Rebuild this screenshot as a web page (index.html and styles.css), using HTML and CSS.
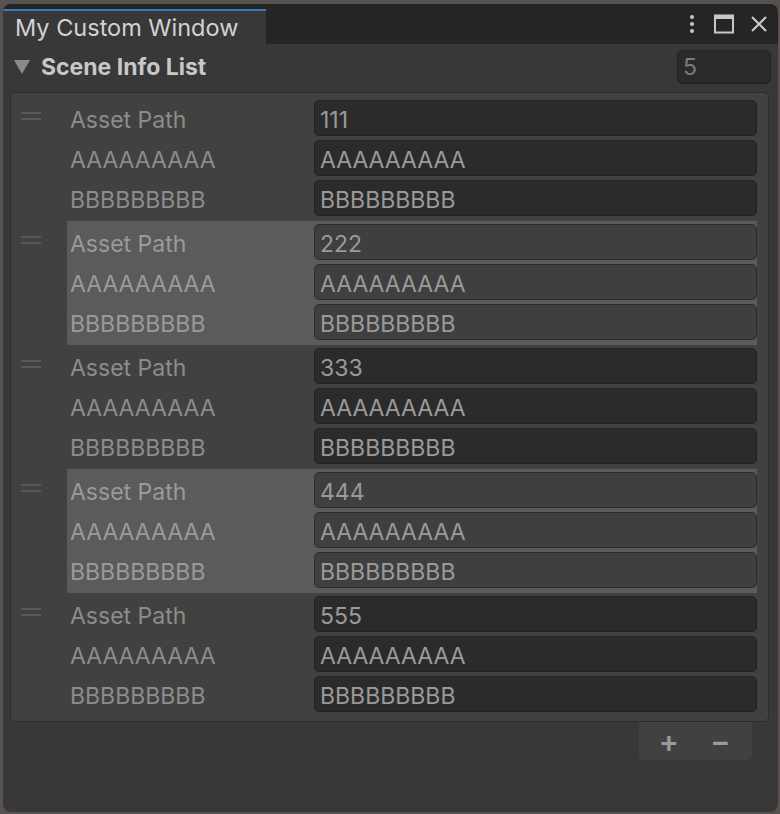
FILE: index.html
```html
<!DOCTYPE html>
<html>
<head>
<meta charset="utf-8">
<link rel="stylesheet" href="styles.css">
</head>
<body>
<div class="window">
  <div class="tabbar">
    <div class="tab">My Custom Window</div>
    <div class="tab-icons">
      <svg class="ico" width="14" height="22" viewBox="0 0 14 22"><circle cx="7" cy="4" r="2" fill="#c8c8c8"/><circle cx="7" cy="11" r="2" fill="#c8c8c8"/><circle cx="7" cy="18" r="2" fill="#c8c8c8"/></svg>
      <svg class="ico" width="22" height="22" viewBox="0 0 22 22"><rect x="2" y="2.5" width="18" height="17" fill="none" stroke="#c8c8c8" stroke-width="2"/><rect x="2" y="2" width="18" height="4" fill="#c8c8c8"/></svg>
      <svg class="ico" width="20" height="20" viewBox="0 0 20 20"><path d="M3 3 L17 17 M17 3 L3 17" stroke="#c8c8c8" stroke-width="2.2"/></svg>
    </div>
  </div>
  <div class="content">
    <div class="header">
      <div class="foldout">
        <svg class="tri" width="18" height="16" viewBox="0 0 18 16"><path d="M1 1 H17 L9 15 Z" fill="#8a8a8a"/></svg>
        <span class="title">Scene Info List</span>
      </div>
      <div class="count">5</div>
    </div>
    <div class="list">
      <div class="element">
        <div class="handle"><span></span><span></span></div>
        <div class="fields">
          <div class="row"><span class="label">Asset Path</span><span class="field">111</span></div>
          <div class="row"><span class="label">AAAAAAAAA</span><span class="field">AAAAAAAAA</span></div>
          <div class="row"><span class="label">BBBBBBBBB</span><span class="field">BBBBBBBBB</span></div>
        </div>
      </div>
      <div class="element sel">
        <div class="handle"><span></span><span></span></div>
        <div class="fields">
          <div class="row"><span class="label">Asset Path</span><span class="field">222</span></div>
          <div class="row"><span class="label">AAAAAAAAA</span><span class="field">AAAAAAAAA</span></div>
          <div class="row"><span class="label">BBBBBBBBB</span><span class="field">BBBBBBBBB</span></div>
        </div>
      </div>
      <div class="element">
        <div class="handle"><span></span><span></span></div>
        <div class="fields">
          <div class="row"><span class="label">Asset Path</span><span class="field">333</span></div>
          <div class="row"><span class="label">AAAAAAAAA</span><span class="field">AAAAAAAAA</span></div>
          <div class="row"><span class="label">BBBBBBBBB</span><span class="field">BBBBBBBBB</span></div>
        </div>
      </div>
      <div class="element sel">
        <div class="handle"><span></span><span></span></div>
        <div class="fields">
          <div class="row"><span class="label">Asset Path</span><span class="field">444</span></div>
          <div class="row"><span class="label">AAAAAAAAA</span><span class="field">AAAAAAAAA</span></div>
          <div class="row"><span class="label">BBBBBBBBB</span><span class="field">BBBBBBBBB</span></div>
        </div>
      </div>
      <div class="element">
        <div class="handle"><span></span><span></span></div>
        <div class="fields">
          <div class="row"><span class="label">Asset Path</span><span class="field">555</span></div>
          <div class="row"><span class="label">AAAAAAAAA</span><span class="field">AAAAAAAAA</span></div>
          <div class="row"><span class="label">BBBBBBBBB</span><span class="field">BBBBBBBBB</span></div>
        </div>
      </div>
    </div>
    <div class="footer">
      <div class="buttons"><span class="btn">+</span><span class="btn">−</span></div>
    </div>
  </div>
</div>
</body>
</html>
```
FILE: styles.css
```css
html, body {
  margin: 0;
  padding: 0;
  background: #57524f;
  width: 780px;
  height: 814px;
  overflow: hidden;
}
body {
  padding: 4px 2px 2px 3px;
  box-sizing: border-box;
  font-family: Inter, "Noto Sans", sans-serif;
}
.window {
  height: 808px;
  background: #383838;
  border-radius: 8px;
  overflow: hidden;
  display: flex;
  flex-direction: column;
}
.tabbar {
  height: 40px;
  background: #252525;
  display: flex;
  align-items: flex-end;
  justify-content: space-between;
  flex-shrink: 0;
}
.tab {
  width: 263px;
  height: 35px;
  box-sizing: border-box;
  border-top: 2px solid #3a79bb;
  background: #383838;
  color: #d2d2d2;
  font-size: 23.5px;
  padding-left: 12px;
  line-height: 34px;
}
.tab-icons {
  display: flex;
  align-items: center;
  align-self: center;
  gap: 14px;
  padding-right: 9px;
}
.content {
  flex: 1;
  display: flex;
  flex-direction: column;
}
.header {
  display: flex;
  justify-content: space-between;
  align-items: center;
  height: 34px;
  margin-top: 6px;
  padding: 0 7px 0 10px;
}
.foldout {
  display: flex;
  align-items: center;
  gap: 10px;
}
.title {
  color: #c8c8c8;
  font-weight: 700;
  font-size: 23px;
}
.count {
  width: 94px;
  height: 34px;
  box-sizing: border-box;
  background: #2a2a2a;
  border: 1px solid #232323;
  border-radius: 5px;
  color: #7a7a7a;
  font-size: 23px;
  line-height: 32px;
  padding-left: 5px;
}
.list {
  margin: 8px 9px 0 7px;
  background: #414141;
  border: 1px solid #2c2c2c;
  border-radius: 5px;
  padding: 4px 0 4px 0;
}
.element {
  display: flex;
  height: 124px;
}
.handle {
  width: 56px;
  flex-shrink: 0;
  display: flex;
  flex-direction: column;
  gap: 4px;
  padding: 15px 0 0 10px;
  box-sizing: border-box;
}
.handle span {
  display: block;
  width: 20px;
  height: 2px;
  background: #595959;
}
.fields {
  flex: 1;
  margin-right: 11px;
  padding: 3px 0 5px 0;
  display: flex;
  flex-direction: column;
  gap: 4px;
}
.sel .fields {
  background: #5b5b5b;
}
.row {
  height: 36px;
  display: flex;
  align-items: center;
}
.label {
  width: 244px;
  padding-left: 3px;
  color: #8c8c8c;
  font-size: 23px;
  line-height: 36px;
  padding-top: 4px;
}
.field {
  flex: 1;
  height: 36px;
  box-sizing: border-box;
  background: #2b2b2b;
  border: 1px solid #222222;
  border-radius: 5px;
  color: #9a9a9a;
  font-size: 23px;
  line-height: 38px;
  padding-left: 5px;
}
.sel .field {
  background: #3f3f3f;
  border-color: #2c2c2c;
}
.sel .label {
  color: #9a9a9a;
}
.footer {
  display: flex;
  justify-content: flex-end;
  padding-right: 26px;
}
.buttons {
  width: 113px;
  height: 38px;
  background: #414141;
  border-radius: 0 0 5px 5px;
  display: flex;
  justify-content: space-around;
  align-items: center;
  padding: 0 6px 0 4px;
  box-sizing: border-box;
}
.btn {
  color: #9a9a9a;
  font-size: 30px;
  font-weight: 600;
  line-height: 38px;
}
```
